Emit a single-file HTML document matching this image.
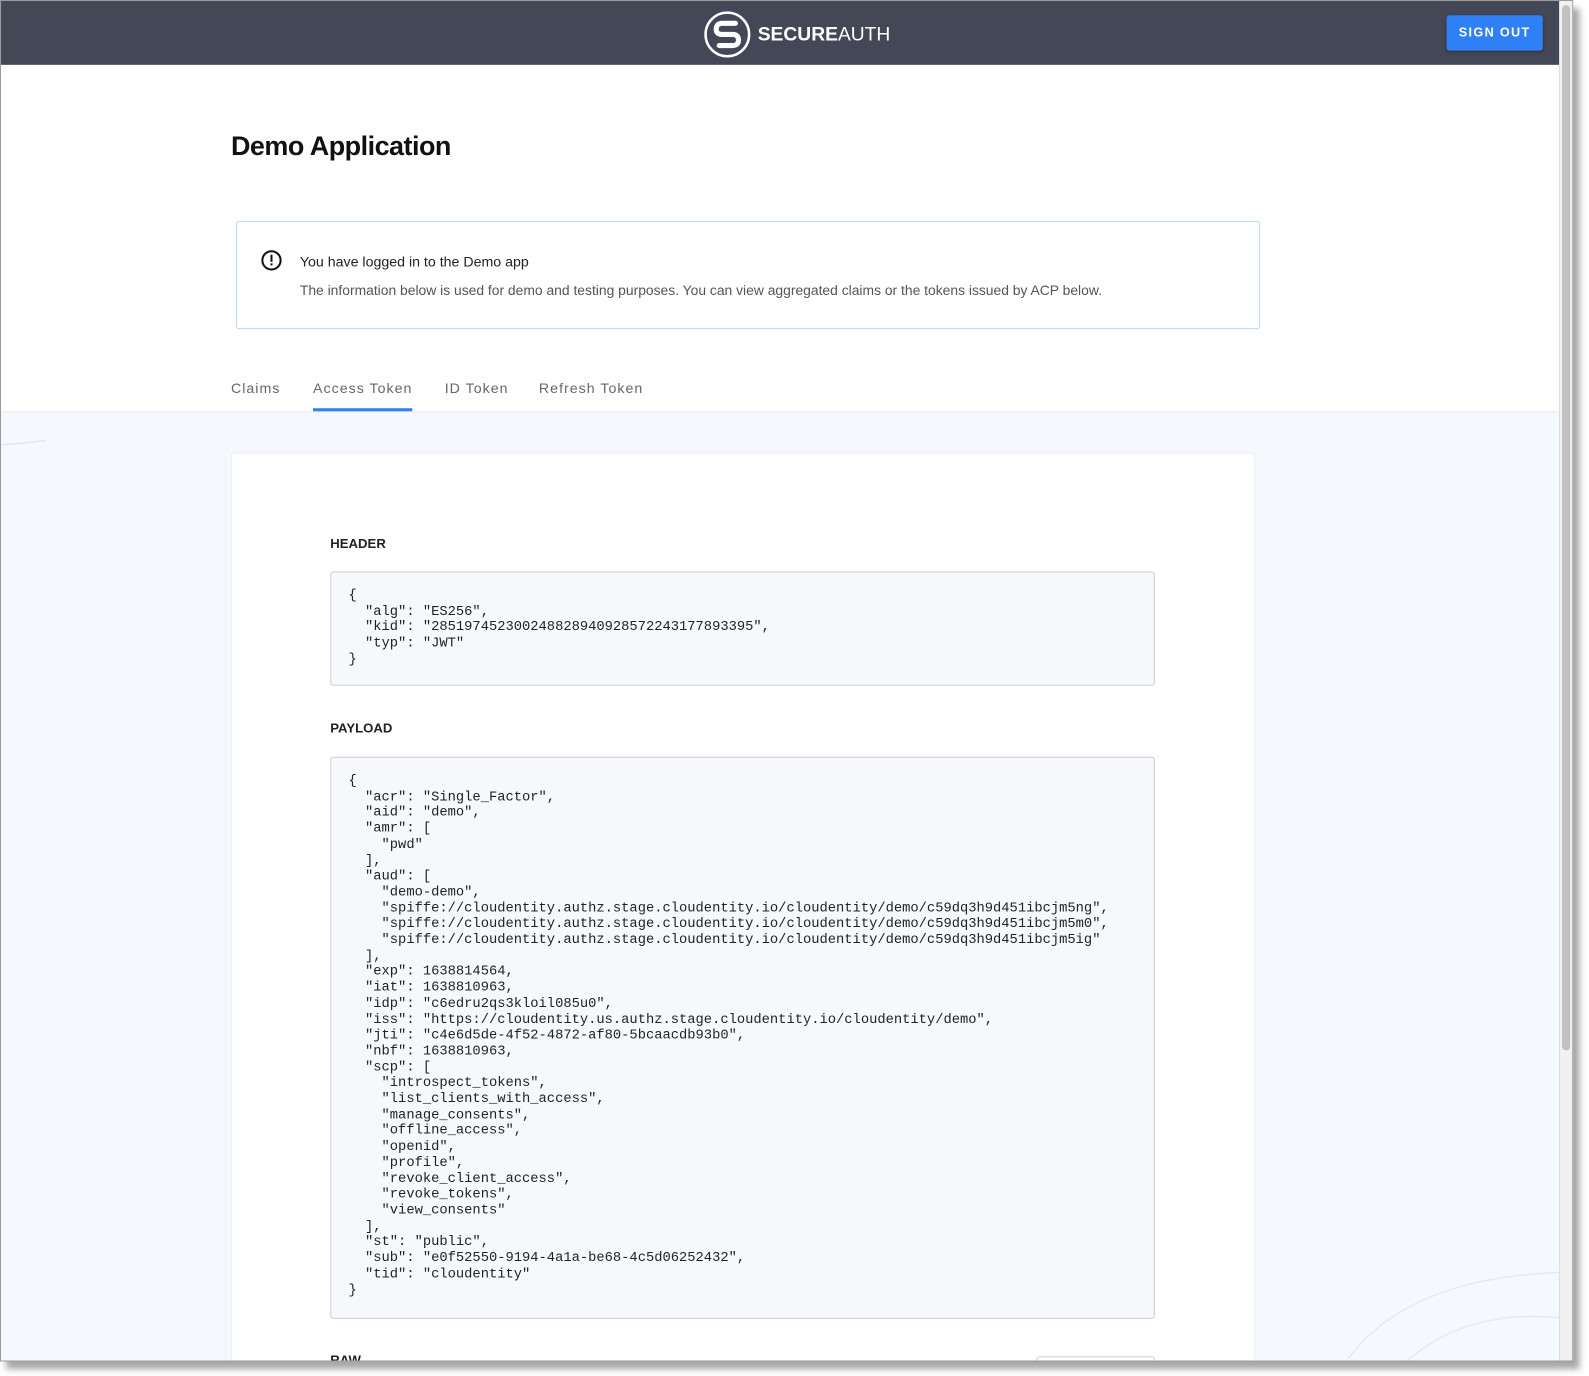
<!DOCTYPE html>
<html><head><meta charset="utf-8"><style>
*{margin:0;padding:0;box-sizing:border-box}
body{width:1589px;height:1376px;background:#fff;position:relative;overflow:hidden;font-family:"Liberation Sans",sans-serif}
#win{position:absolute;left:0;top:0;width:1553px;height:1344px;border:1px solid #9a9a9a;overflow:hidden;background:#fff;box-shadow:6px 8px 6px rgba(0,0,0,0.35);transform:scale(1.013);transform-origin:0 0}
#top{position:absolute;left:0;top:0;width:1538px;height:63px;background:#434756}
#scroll{position:absolute;left:1538px;top:0;width:14px;height:1344px;background:#f1f1f1;border-left:1px solid #ddd}
#thumb{position:absolute;left:1541px;top:4px;width:8px;height:1032px;background:#c1c1c1;border-radius:4px}
.logo{position:absolute;left:694px;top:10px}
.brand{position:absolute;left:747px;top:23px;color:#fff;font-size:19px;letter-spacing:0}
.btn{position:absolute;left:1427px;top:14px;width:95px;height:35px;background:#2f7ff5;border-radius:3px;color:#fff;font-size:12.5px;font-weight:bold;letter-spacing:1.3px;text-align:center;line-height:35px;box-shadow:0 1px 3px rgba(0,0,0,.3)}
h1{position:absolute;left:227px;top:128px;font-size:26.6px;font-weight:bold;color:#111;letter-spacing:-0.5px}
.info{position:absolute;left:232px;top:217px;width:1011px;height:107px;border:1px solid #bcd6f2;border-radius:3px}
.info .t1{position:absolute;left:62px;top:31px;font-size:14px;color:#222}
.info .t2{position:absolute;left:62px;top:60px;font-size:13.7px;color:#555}
.info svg{position:absolute;left:23px;top:27px}
.tab{position:absolute;top:374px;font-size:14px;color:#666;letter-spacing:1px}
#under{position:absolute;left:308px;top:402px;width:98px;height:3px;background:#2f7ff5}
#bg{position:absolute;left:0;top:405px;width:1538px;height:940px;background:#f5f8fc;border-top:1px solid #e6ebf1}
#card{position:absolute;left:227px;top:446px;width:1011px;height:900px;background:#fff;border:1px solid #edf0f4}
.lbl{position:absolute;left:325px;font-size:13px;font-weight:bold;color:#222}
pre{position:absolute;left:325px;width:814px;background:#f6f8fc;border:1px solid #c9cdd3;border-radius:3px;padding:16px 0 0 17px;font-family:"Liberation Mono",monospace;font-size:13.6px;line-height:15.7px;color:#222}
</style></head><body>
<div id="win">
<div id="bg"></div>
<svg style="position:absolute;left:0;top:425px" width="50" height="15"><path d="M0 13 Q20 12 44 9" stroke="#dfe8f4" fill="none" stroke-width="1.5"/></svg>
<svg style="position:absolute;left:1300px;top:1220px" width="240" height="130"><path d="M30 120 Q90 40 240 35" stroke="#e3ebf5" fill="none" stroke-width="1.5"/><path d="M80 130 Q140 70 240 80" stroke="#e3ebf5" fill="none" stroke-width="1.5"/></svg>
<div id="card"></div>
<div id="top"></div>
<svg class="logo" width="46" height="46" viewBox="0 0 46 46"><circle cx="23" cy="23" r="21.5" fill="none" stroke="#fff" stroke-width="2.5"/><path d="M31 12 L18 12 Q12 12 12 18 Q12 23 18 23 L28 23 Q34 23 34 28.5 Q34 34 28 34 L15 34" fill="none" stroke="#fff" stroke-width="5" stroke-linecap="round"/></svg>
<div class="brand"><b>SECURE</b>AUTH</div>
<div class="btn">SIGN OUT</div>
<h1>Demo Application</h1>
<div class="info">
<svg width="22" height="22" viewBox="0 0 22 22"><circle cx="11" cy="11" r="9" fill="none" stroke="#111" stroke-width="2"/><rect x="10" y="5.5" width="2" height="7" fill="#111"/><rect x="10" y="14" width="2" height="2" fill="#111"/></svg>
<div class="t1">You have logged in to the Demo app</div>
<div class="t2">The information below is used for demo and testing purposes. You can view aggregated claims or the tokens issued by ACP below.</div>
</div>
<div class="tab" style="left:227px">Claims</div>
<div class="tab" style="left:308px">Access Token</div>
<div class="tab" style="left:438px">ID Token</div>
<div class="tab" style="left:531px">Refresh Token</div>
<div id="under"></div>
<div class="lbl" style="top:528px">HEADER</div>
<pre style="top:563px;height:113px">{
  "alg": "ES256",
  "kid": "285197452300248828940928572243177893395",
  "typ": "JWT"
}</pre>
<div class="lbl" style="top:710px">PAYLOAD</div>
<pre style="top:746px;height:555px">{
  "acr": "Single_Factor",
  "aid": "demo",
  "amr": [
    "pwd"
  ],
  "aud": [
    "demo-demo",
    "spiffe://cloudentity.authz.stage.cloudentity.io/cloudentity/demo/c59dq3h9d451ibcjm5ng",
    "spiffe://cloudentity.authz.stage.cloudentity.io/cloudentity/demo/c59dq3h9d451ibcjm5m0",
    "spiffe://cloudentity.authz.stage.cloudentity.io/cloudentity/demo/c59dq3h9d451ibcjm5ig"
  ],
  "exp": 1638814564,
  "iat": 1638810963,
  "idp": "c6edru2qs3kloil085u0",
  "iss": "https://cloudentity.us.authz.stage.cloudentity.io/cloudentity/demo",
  "jti": "c4e6d5de-4f52-4872-af80-5bcaacdb93b0",
  "nbf": 1638810963,
  "scp": [
    "introspect_tokens",
    "list_clients_with_access",
    "manage_consents",
    "offline_access",
    "openid",
    "profile",
    "revoke_client_access",
    "revoke_tokens",
    "view_consents"
  ],
  "st": "public",
  "sub": "e0f52550-9194-4a1a-be68-4c5d06252432",
  "tid": "cloudentity"
}</pre>
<div class="lbl" style="top:1334px">RAW</div>
<div style="position:absolute;left:1022px;top:1338px;width:117px;height:20px;border:1px solid #ccc;border-radius:3px"></div>
<div id="scroll"></div><div id="thumb"></div>
</div>
</body></html>
